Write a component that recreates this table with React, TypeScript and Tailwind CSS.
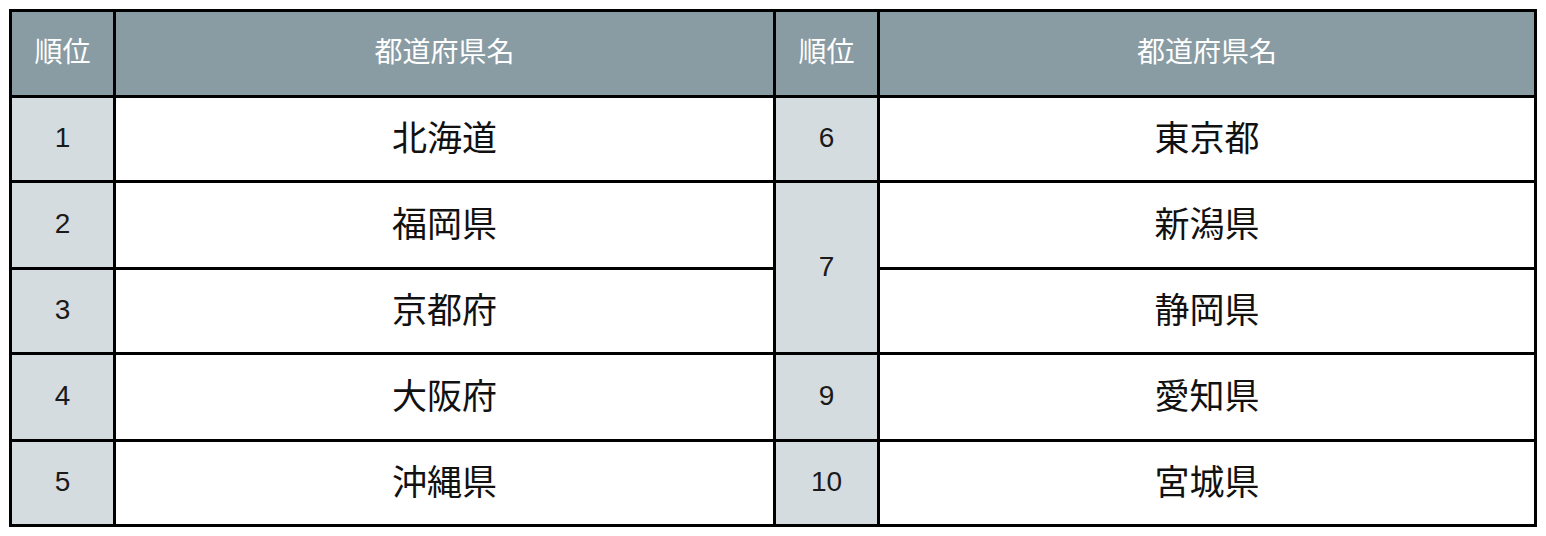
import React from "react";

type Cell = { kind: "rank" | "name"; text: string; span?: boolean };

const cells: Cell[] = [
  { kind: "rank", text: "1" },
  { kind: "name", text: "北海道" },
  { kind: "rank", text: "6" },
  { kind: "name", text: "東京都" },
  { kind: "rank", text: "2" },
  { kind: "name", text: "福岡県" },
  { kind: "rank", text: "7", span: true },
  { kind: "name", text: "新潟県" },
  { kind: "rank", text: "3" },
  { kind: "name", text: "京都府" },
  { kind: "name", text: "静岡県" },
  { kind: "rank", text: "4" },
  { kind: "name", text: "大阪府" },
  { kind: "rank", text: "9" },
  { kind: "name", text: "愛知県" },
  { kind: "rank", text: "5" },
  { kind: "name", text: "沖縄県" },
  { kind: "rank", text: "10" },
  { kind: "name", text: "宮城県" },
];

const head =
  "bg-[#899ba3] text-white text-[28px] flex items-center justify-center pb-[8px]";
const rank =
  "bg-[#d5dce0] text-[#1a1a1a] text-[28px] flex items-center justify-center pb-[2px] font-['Liberation_Sans',Arial,sans-serif]";
const rankSpan =
  "row-span-2 bg-[#d5dce0] text-[#1a1a1a] text-[28px] flex items-center justify-center pb-[2px] font-['Liberation_Sans',Arial,sans-serif]";
const name =
  "bg-white text-[#111] text-[35px] flex items-center justify-center pb-[5px]";

export default function App() {
  return (
    <div className="w-[1546px] h-[536px] bg-white pt-[9px] pl-[9px] font-['Noto_Sans_CJK_JP','Noto_Sans',sans-serif]">
      <div className="grid w-[1528px] bg-black p-[3px] gap-[3px] grid-cols-[101px_657px_101px_654px] grid-rows-[83px_82px_84px_82px_84px_82px]">
        <div className={head}>順位</div>
        <div className={head}>都道府県名</div>
        <div className={head}>順位</div>
        <div className={head}>都道府県名</div>
        {cells.map((c, i) => (
          <div
            key={i}
            className={c.kind === "name" ? name : c.span ? rankSpan : rank}
          >
            {c.text}
          </div>
        ))}
      </div>
    </div>
  );
}
